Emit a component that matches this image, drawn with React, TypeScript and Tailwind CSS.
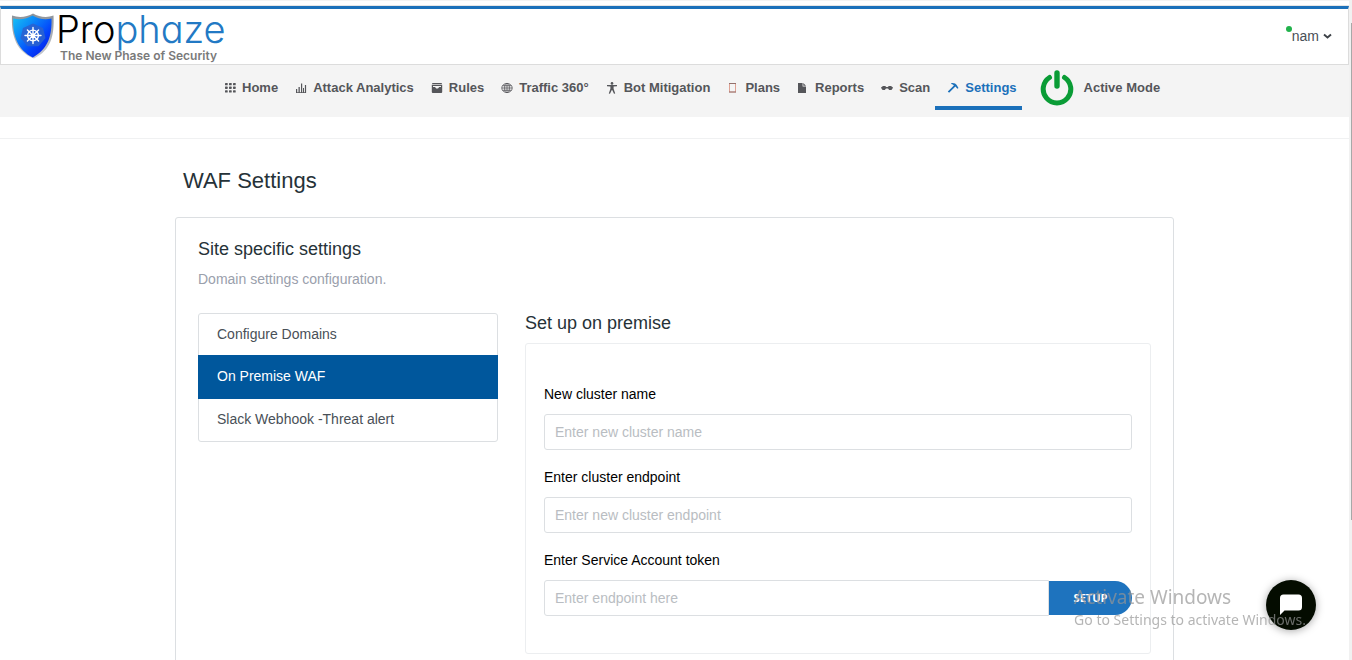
import type { ReactNode } from "react";

const Icon = ({ children }: { children: ReactNode }) => (
  <svg viewBox="0 0 12 12" className="size-3 shrink-0" fill="currentColor" aria-hidden="true">
    {children}
  </svg>
);

const navItems: { label: string; icon: ReactNode; active?: boolean }[] = [
  {
    label: "Home",
    icon: (
      <Icon>
        {[1, 4.6, 8.2].map((y) =>
          [1, 5, 9].map((x) => <rect key={`${x}-${y}`} x={x} y={y} width="2.7" height="2.3" rx="0.6" />),
        )}
      </Icon>
    ),
  },
  {
    label: "Attack Analytics",
    icon: (
      <Icon>
        <path d="M1 7h1.200v4H1zM3.500 5h1.300v6H3.500zM6 1.500h1.200V11H6zM8 6h1v5H8zM9.900 3h1.200v8H9.900zM1 10.200h10v.8H1z" />
      </Icon>
    ),
  },
  {
    label: "Rules",
    icon: (
      <Icon>
        <path d="M1.200 1h9.600v1.100H1.200z" />
        <path
          fillRule="evenodd"
          d="M.8 2.800h10.400V10a1 1 0 0 1-1 1H1.800a1 1 0 0 1-1-1V2.800zM2 4v1h2L5.200 6.600h1.800L8.200 5H10V4z"
        />
      </Icon>
    ),
  },
  {
    label: "Traffic 360°",
    icon: (
      <Icon>
        <g fill="none" stroke="currentColor" strokeWidth="0.8">
          <ellipse cx="6" cy="6" rx="5.200" ry="4.600" />
          <ellipse cx="6" cy="6" rx="2.400" ry="4.600" />
          <path d="M6 1.400v9.200M.8 6h10.400M1.600 3.700h8.800M1.600 8.300h8.800" />
        </g>
      </Icon>
    ),
  },
  {
    label: "Bot Mitigation",
    icon: (
      <Icon>
        <circle cx="6" cy="1.400" r="1.300" />
        <path d="M1 3h10v1.200L7.600 4.600v2.200l1.600 4.600-1.200.4L6.200 8h-.4L4 11.800l-1.200-.4 1.600-4.600V4.600L1 4.200z" />
      </Icon>
    ),
  },
  {
    label: "Plans",
    icon: (
      <Icon>
        <rect x="2.500" y="1.500" width="6" height="8.500" fill="none" stroke="#dfa294" strokeWidth="1" />
        <path d="M2 1.500h7M2 10h7" stroke="#8a6a66" strokeWidth="0.9" />
      </Icon>
    ),
  },
  {
    label: "Reports",
    icon: (
      <Icon>
        <path d="M1 1h4.600v3.400H9V11H1zM6.300 1L9 3.700H6.300z" />
      </Icon>
    ),
  },
  {
    label: "Scan",
    icon: (
      <Icon>
        <path d="M0 5.500 2 4h2.200l1 1h1.600l1-1H10l2 1.500-.6 1.300-1 1.200H8.200L7 6.400H5L3.800 8H1.600L.6 6.800z" />
      </Icon>
    ),
  },
  {
    label: "Settings",
    active: true,
    icon: (
      <Icon>
        <path d="M4.300 1.100c3-.3 4.400.5 5.400 2l1.800 3-1.100.6-2-2.200-6.300 6.300L.8 9.600l6.100-6C6.200 2.500 5.400 2 4.300 1.900z" />
      </Icon>
    ),
  },
];

const sections = [
  { label: "Configure Domains", active: false },
  { label: "On Premise WAF", active: true },
  { label: "Slack Webhook -Threat alert", active: false },
];

const inputClass =
  "h-9 w-full min-w-0 border border-[#dcdfe2] bg-white px-2.5 text-sm text-[#495057] outline-none placeholder:text-[#b9bdc2]";

function Logo() {
  return (
    <a href="#" className="flex items-start pl-[9px]" aria-label="Prophaze">
      <svg viewBox="0 0 46 50" className="mt-[3px] h-[50px] w-[46px] shrink-0" aria-hidden="true">
        <defs>
          <linearGradient id="shield" x1="0" y1="0" x2="1" y2="1">
            <stop offset="0" stopColor="#16c4f5" />
            <stop offset="0.3" stopColor="#0c8df8" />
            <stop offset="0.65" stopColor="#0341fb" />
            <stop offset="1" stopColor="#0713dc" />
          </linearGradient>
          <linearGradient id="rim" x1="0" y1="0" x2="0" y2="1">
            <stop offset="0" stopColor="#8d9298" />
            <stop offset="1" stopColor="#c9ccd2" />
          </linearGradient>
        </defs>
        <path
          d="M2 3.500C9 6 17 5 23 1.500 29 5 37 6 43.500 3.500 44.500 24 41 38 24 46.500 7 40 1 25 2 3.500z"
          fill="url(#rim)"
        />
        <path
          d="M3.200 6.500C10 8 17 7 22.500 3.500 28 7 35 8 41.500 6.500 42 24 38 37 22.800 45.500 8 38 2.500 24 3.200 6.500z"
          fill="url(#shield)"
        />
        <path d="M23 11.500l10 4.500 2.500 10-7 8.200h-11l-7-8.200L13 16z" fill="#2a62cf" opacity="0.9" />
        <g fill="none" stroke="#fff" strokeWidth="1.400" strokeLinecap="round">
          <circle cx="23" cy="23.500" r="5.400" />
          <path d="M23 15.500v16M15 23.500h16M17.400 17.900l11.200 11.200M28.600 17.900L17.400 29.100" />
        </g>
        <circle cx="23" cy="23.500" r="1.700" fill="#fff" />
      </svg>
      <span className="flex flex-col whitespace-nowrap font-['Inter','Liberation_Sans',sans-serif]">
        <span className="text-[38px] leading-[41px] font-light text-black [font-feature-settings:'cv11']">
          Pro<span className="text-[#2279c4]">phaze</span>
        </span>
        <span className="pl-1 text-xs leading-3 font-semibold text-[#7a7a7a]">The New Phase of Security</span>
      </span>
    </a>
  );
}

function Field({ id, label, placeholder }: { id: string; label: string; placeholder: string }) {
  return (
    <div className="flex flex-col gap-2.5">
      <label htmlFor={id} className="text-sm text-black">
        {label}
      </label>
      <input id={id} type="text" placeholder={placeholder} className={`${inputClass} rounded-[3px]`} />
    </div>
  );
}

export default function App() {
  return (
    <div className="flex h-screen overflow-hidden bg-white font-['Liberation_Sans',Arial,sans-serif] text-[#263238]">
      <div className="min-w-0 flex-1">
        <div className="h-1.5 border-t border-b border-t-[#f3f3f3] border-b-[#e6e6e6]" />
        <header className="flex justify-between border-x border-t-[3px] border-b border-x-[#dcdcdc] border-t-[#1b70ba] border-b-[#dcdcdc] pb-0.5">
          <Logo />
          <button type="button" className="relative mt-[15px] mr-4 flex h-6 items-center gap-1 text-sm text-[#495057]">
            <span className="absolute top-0.5 -left-1.5 size-1.5 rounded-full bg-[#22b24c]" />
            nam
            <svg viewBox="0 0 9 8" className="h-2 w-[9px]" aria-hidden="true">
              <path d="M1 2.500l3.500 3L8 2.500" fill="none" stroke="#3d4247" strokeWidth="1.900" />
            </svg>
          </button>
        </header>

        <nav className="bg-[#f4f4f4] pb-[7px]">
          <div className="mx-auto flex max-w-[999px] items-center pl-[37px]">
            {navItems.map((item) => (
              <a
                key={item.label}
                href="#"
                aria-current={item.active ? "page" : undefined}
                className={`flex h-[45px] items-center gap-1.5 border-y-4 border-t-transparent pr-[5px] pl-3 text-[13px] font-bold whitespace-nowrap ${
                  item.active ? "border-b-[#1b70ba] text-[#1b70ba]" : "border-b-transparent text-[#55565a]"
                }`}
              >
                {item.icon}
                {item.label}
              </a>
            ))}
            <button
              type="button"
              className="ml-[18px] flex items-center gap-2.5 text-[13px] font-bold whitespace-nowrap text-[#55565a]"
            >
              <svg viewBox="0 0 34 36" className="h-9 w-[34px]" aria-hidden="true">
                <g fill="none" stroke="#0a9c36" strokeLinecap="round">
                  <path d="M9.500 7.500A13.800 13.800 0 1 0 24.500 7.500" strokeWidth="5" />
                  <path d="M17 3v13" strokeWidth="5.400" />
                </g>
              </svg>
              Active Mode
            </button>
          </div>
        </nav>
        <div className="h-[22px] border-b border-[#f0f1f2]" />

        <main className="mx-auto max-w-[999px]">
          <h1 className="px-2 pt-[29px] pb-[23px] text-[22px] leading-[26px]">WAF Settings</h1>
          <section className="rounded-[3px] border border-[#dcdfe2] px-[22px] pt-[19px] pb-8">
            <h2 className="text-lg leading-6">Site specific settings</h2>
            <p className="mt-2 text-sm text-[#9aa0ac]">Domain settings configuration.</p>
            <div className="mt-6 flex items-start gap-[27px]">
              <div className="w-[300px] shrink-0 rounded-[3px] border border-[#dcdfe2]">
                {sections.map((section) => (
                  <a
                    key={section.label}
                    href="#"
                    aria-current={section.active ? "true" : undefined}
                    className={`flex items-center pb-0.5 text-sm ${
                      section.active
                        ? "-mx-px h-11 bg-[#00579c] px-[19px] text-white"
                        : "h-[42px] px-[18px] text-[#495057] first:h-[41px]"
                    }`}
                  >
                    {section.label}
                  </a>
                ))}
              </div>
              <div className="min-w-0 flex-1">
                <h3 className="text-lg leading-5">Set up on premise</h3>
                <form className="mt-2.5 flex flex-col gap-[17px] rounded-[3px] border border-[#eceef0] px-[18px] pt-10 pb-[37px]">
                  <Field id="cluster-name" label="New cluster name" placeholder="Enter new cluster name" />
                  <Field id="cluster-endpoint" label="Enter cluster endpoint" placeholder="Enter new cluster endpoint" />
                  <div className="flex flex-col gap-2.5">
                    <label htmlFor="token" className="text-sm text-black">
                      Enter Service Account token
                    </label>
                    <div className="flex items-center">
                      <input
                        id="token"
                        type="text"
                        placeholder="Enter endpoint here"
                        className={`${inputClass} rounded-l-[3px]`}
                      />
                      <button
                        type="button"
                        className="h-[34px] w-[83px] shrink-0 rounded-r-full bg-[#1e73be] font-['Open_Sans',sans-serif] text-[11px] font-bold text-white"
                      >
                        SETUP
                      </button>
                    </div>
                  </div>
                </form>
              </div>
            </div>
          </section>
        </main>
      </div>

      <div className="w-[3px] shrink-0 bg-[#f1f1f1] pt-[23px]" aria-hidden="true">
        <div className="ml-auto h-[78%] w-px bg-[#a8a8a8]" />
      </div>

      <button
        type="button"
        aria-label="Open chat"
        className="fixed right-9 bottom-[30px] flex size-[50px] items-center justify-center rounded-full bg-[#040c00] shadow-[0_1px_8px_rgba(0,0,0,0.35)]"
      >
        <svg viewBox="0 0 24 22" className="h-[22px] w-6" fill="#fff" aria-hidden="true">
          <path d="M4.500 0.500h15A3.500 3.500 0 0 1 23 4v9a3.500 3.500 0 0 1-3.500 3.500H5.500L1 21V4A3.500 3.500 0 0 1 4.500 0.500z" />
        </svg>
      </button>

      <div className="pointer-events-none fixed right-[46px] bottom-[30px] font-['Noto_Sans','Open_Sans',sans-serif] whitespace-nowrap text-[#969696]/70">
        <p className="text-[19px] leading-[26px]">Activate Windows</p>
        <p className="text-sm leading-5">Go to Settings to activate Windows.</p>
      </div>
    </div>
  );
}
